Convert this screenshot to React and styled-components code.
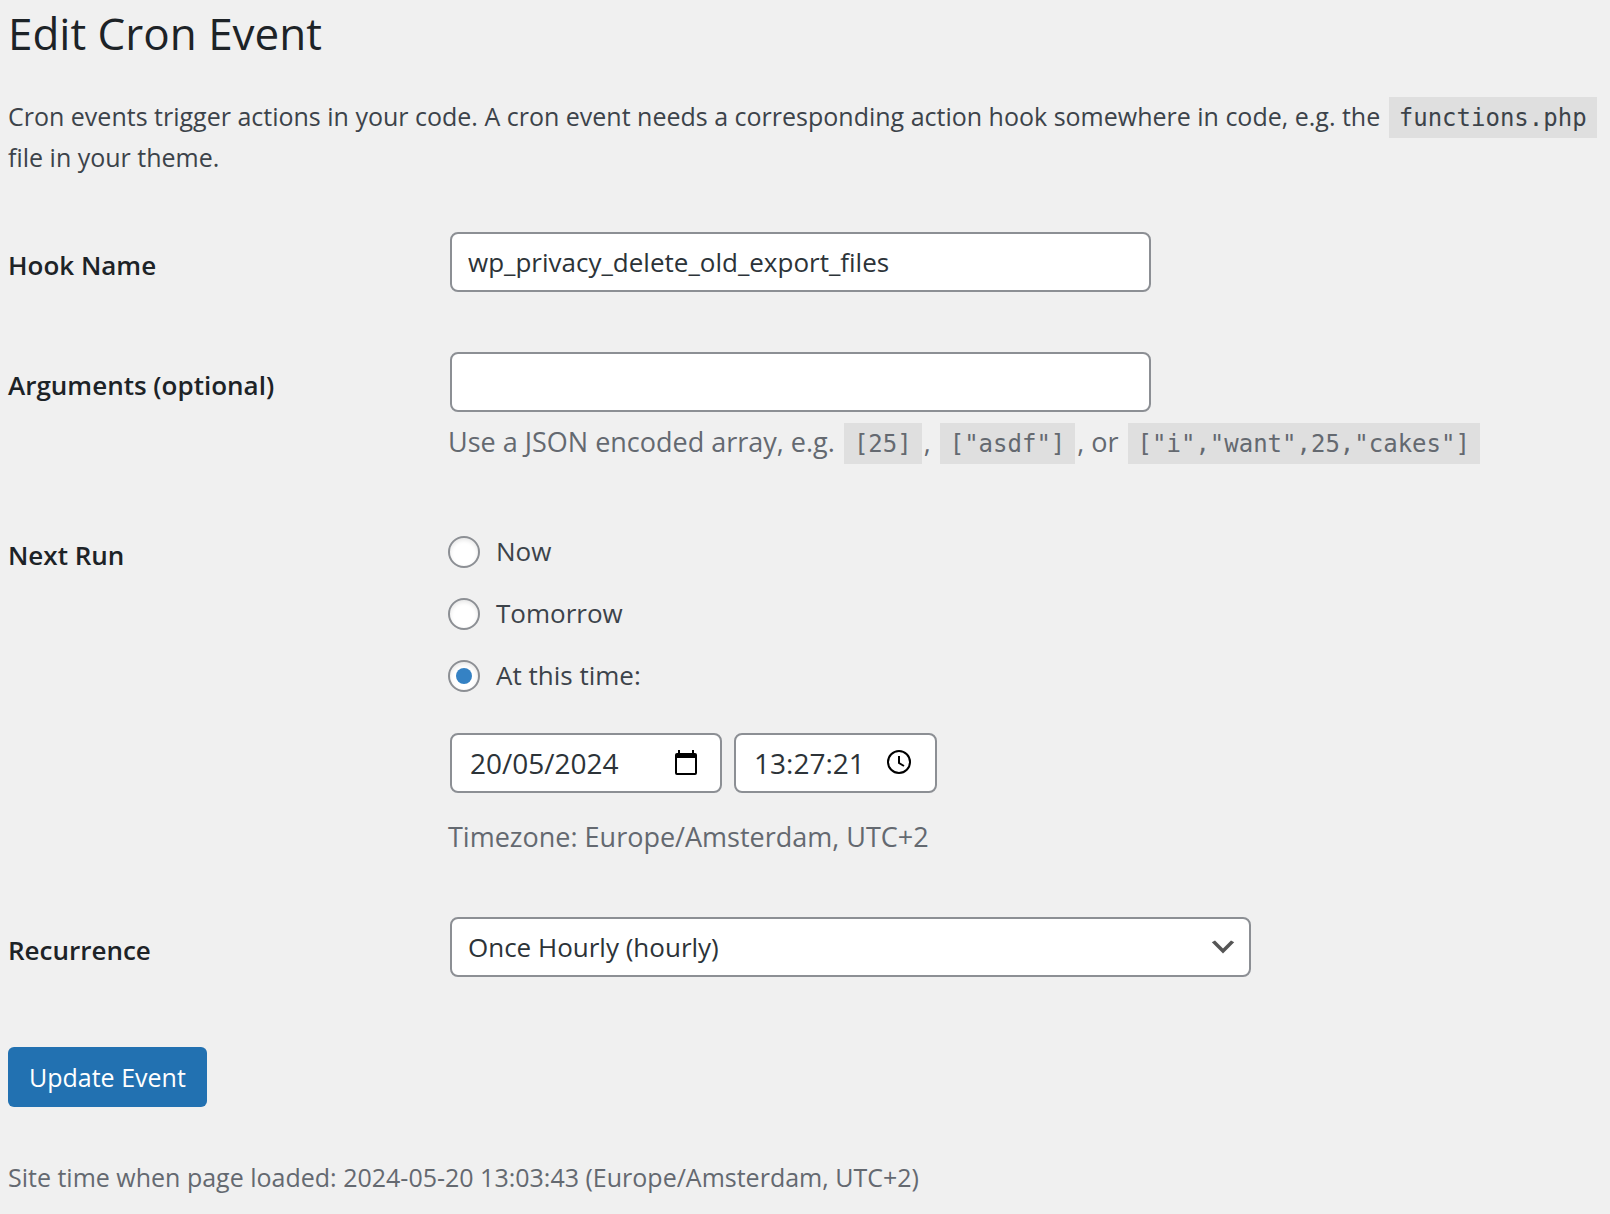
import React, { useState } from 'react'
import styled, { createGlobalStyle, ThemeProvider } from 'styled-components'

const theme = {
  background: '#f0f0f0',
  primary: '#2271b1',
  accent: '#3582c4',
  heading: '#1d2327',
  text: '#3c434a',
  input: '#2c3338',
  muted: '#646970',
  border: '#8c8f94',
  sans: '"Segoe UI", "Open Sans", "Noto Sans", sans-serif',
  mono: 'Consolas, "DejaVu Sans Mono", "Liberation Mono", monospace'
}

const GlobalStyle = createGlobalStyle`
  *, *::before, *::after {
    box-sizing: border-box;
  }

  body {
    margin: 0;
    background: ${theme.background};
    color: ${theme.text};
    font-family: ${theme.sans};
    font-size: 25px;
    line-height: 41px;
  }
`

const Page = styled.main`
  padding: 3px 8px 16px;
`

const Title = styled.h1`
  margin: 0;
  color: ${({ theme }) => theme.heading};
  font-size: 44px;
  font-weight: 400;
  line-height: 60px;
`

const Intro = styled.p`
  margin: 33px 0 24px;
`

const Code = styled.code`
  margin: 0 2px;
  padding: 7px 10px 6px;
  background: rgba(0, 0, 0, 0.07);
  font-family: ${({ theme }) => theme.mono};
  font-size: 24px;
  line-height: 1;
`

const Row = styled.div`
  display: grid;
  grid-template-columns: 440px 1fr;
  padding: 30px 0;
  font-size: 26px;

  .heading {
    padding-top: 13px;
    color: ${({ theme }) => theme.heading};
    font-weight: 600;
  }
`

const controlStyle = `
  height: 60px;
  border: 2px solid ${theme.border};
  border-radius: 8px;
  background: white;
  color: ${theme.input};
`

const TextInput = styled.input`
  ${controlStyle}
  display: block;
  width: 701px;
  max-width: 100%;
  margin: 0 2px;
  padding: 0 16px;
  font: inherit;
`

const Description = styled.p`
  margin: ${({ $top }) => $top}px 0 0;
  color: ${({ theme }) => theme.muted};
  font-size: 27px;
`

const SiteTime = styled.p`
  margin: 50px 0 0;
  color: ${({ theme }) => theme.muted};
`

const Options = styled.div`
  display: flex;
  flex-direction: column;
  align-items: flex-start;
  gap: 21px;
  padding-top: 9px;
`

const Option = styled.label`
  display: flex;
  align-items: center;
  gap: 16px;
`

const Radio = styled.input`
  display: grid;
  place-items: center;
  width: 32px;
  height: 32px;
  margin: 0;
  appearance: none;
  border: 2px solid ${({ theme }) => theme.border};
  border-radius: 50%;
  background: white;
  box-shadow: inset 0 2px 4px rgba(0, 0, 0, 0.1);

  &:checked::before {
    content: '';
    width: 16px;
    height: 16px;
    border-radius: 50%;
    background: ${({ theme }) => theme.accent};
  }
`

const DateTime = styled.div`
  display: flex;
  gap: 12px;
  margin: 37px 2px 0;
  font-size: 28px;
`

const PickerField = styled.div`
  ${controlStyle}
  display: flex;
  align-items: center;
  justify-content: space-between;
  width: ${({ $width }) => $width}px;
  padding: 0 22px 0 18px;

  input {
    flex: 1;
    min-width: 0;
    padding: 0;
    border: 0;
    outline: 0;
    background: none;
    color: inherit;
    font: inherit;
  }

  button {
    display: flex;
    padding: 0;
    border: 0;
    background: none;
    color: black;
  }
`

const SelectWrapper = styled.div`
  display: grid;
  align-items: center;
  width: 801px;
  max-width: 100%;
  margin: 0 2px;

  select, svg {
    grid-area: 1 / 1;
  }

  select {
    ${controlStyle}
    width: 100%;
    padding: 0 48px 0 16px;
    appearance: none;
    font: inherit;
  }

  svg {
    justify-self: end;
    margin-right: 12px;
    pointer-events: none;
  }
`

const Button = styled.button`
  display: block;
  height: 60px;
  margin-top: 40px;
  padding: 0 21px;
  border: 0;
  border-radius: 6px;
  background: ${({ theme }) => theme.primary};
  color: white;
  font: inherit;
`

const CalendarIcon = () => (
  <svg width="24" height="26" viewBox="0 0 24 26" aria-hidden="true">
    <path
      fill="currentColor"
      fillRule="evenodd"
      d="M4 0h2v3h12V0h2v3h1a2 2 0 0 1 2 2v18a2 2 0 0 1-2 2H3a2 2 0 0 1-2-2V5a2 2 0 0 1 2-2h1zM3 8v15h18V8z"
    />
  </svg>
)

const ClockIcon = () => (
  <svg width="26" height="26" viewBox="0 0 26 26" fill="none" stroke="currentColor" aria-hidden="true">
    <circle cx="12" cy="12" r="11" strokeWidth="2" />
    <path d="M12 6v7l5 3" strokeWidth="2" />
  </svg>
)

const ChevronIcon = () => (
  <svg width="32" height="32" viewBox="0 0 20 20" fill="#555" aria-hidden="true">
    <path d="M5 6l5 5 5-5 2 1-7 7-7-7 2-1z" />
  </svg>
)

const options = [
  { value: 'now', label: 'Now' },
  { value: 'tomorrow', label: 'Tomorrow' },
  { value: 'custom', label: 'At this time:' }
]

const App = () => {
  const [nextRun, setNextRun] = useState('custom')

  return (
    <ThemeProvider theme={theme}>
      <GlobalStyle />
      <Page>
        <Title>Edit Cron Event</Title>
        <Intro>
          Cron events trigger actions in your code. A cron event needs a corresponding action hook
          somewhere in code, e.g. the <Code>functions.php</Code> file in your theme.
        </Intro>
        <form onSubmit={(e) => e.preventDefault()}>
          <Row>
            <label className="heading" htmlFor="hookname">Hook Name</label>
            <TextInput id="hookname" type="text" defaultValue="wp_privacy_delete_old_export_files" spellCheck={false} />
          </Row>
          <Row>
            <label className="heading" htmlFor="args">Arguments (optional)</label>
            <div>
              <TextInput id="args" type="text" />
              <Description $top={9}>
                Use a JSON encoded array, e.g. <Code>[25]</Code>, <Code>["asdf"]</Code>, or{' '}
                <Code>["i","want",25,"cakes"]</Code>
              </Description>
            </div>
          </Row>
          <Row role="radiogroup" aria-labelledby="next-run">
            <div className="heading" id="next-run">Next Run</div>
            <div>
              <Options>
                {options.map((item) => (
                  <Option key={item.value}>
                    <Radio
                      type="radio"
                      name="next_run"
                      value={item.value}
                      checked={nextRun === item.value}
                      onChange={() => setNextRun(item.value)}
                    />
                    {item.label}
                  </Option>
                ))}
              </Options>
              <DateTime>
                <PickerField $width={272}>
                  <input type="text" aria-label="Date" defaultValue="20/05/2024" />
                  <button type="button" aria-label="Pick a date"><CalendarIcon /></button>
                </PickerField>
                <PickerField $width={203}>
                  <input type="text" aria-label="Time" defaultValue="13:27:21" />
                  <button type="button" aria-label="Pick a time"><ClockIcon /></button>
                </PickerField>
              </DateTime>
              <Description $top={23}>Timezone: Europe/Amsterdam, UTC+2</Description>
            </div>
          </Row>
          <Row>
            <label className="heading" htmlFor="schedule">Recurrence</label>
            <SelectWrapper>
              <select id="schedule" defaultValue="hourly">
                <option value="hourly">Once Hourly (hourly)</option>
              </select>
              <ChevronIcon />
            </SelectWrapper>
          </Row>
          <Button type="submit">Update Event</Button>
        </form>
        <SiteTime>
          Site time when page loaded: 2024-05-20 13:03:43 (Europe/Amsterdam, UTC+2)
        </SiteTime>
      </Page>
    </ThemeProvider>
  )
}

export default App
